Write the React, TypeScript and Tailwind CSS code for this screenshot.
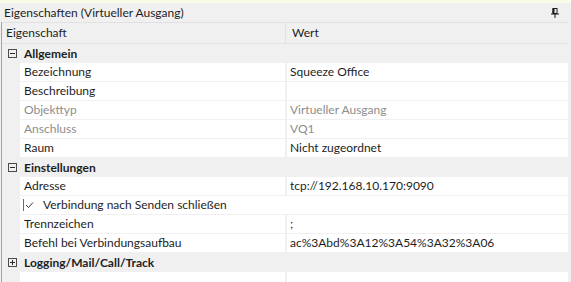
import React from "react";

type Row =
  | { kind: "cat"; label: string; open: boolean }
  | { kind: "prop"; name: string; value: string; muted?: boolean }
  | { kind: "check"; label: string };

const rows: Row[] = [
  { kind: "cat", label: "Allgemein", open: true },
  { kind: "prop", name: "Bezeichnung", value: "Squeeze Office" },
  { kind: "prop", name: "Beschreibung", value: "" },
  { kind: "prop", name: "Objekttyp", value: "Virtueller Ausgang", muted: true },
  { kind: "prop", name: "Anschluss", value: "VQ1", muted: true },
  { kind: "prop", name: "Raum", value: "Nicht zugeordnet" },
  { kind: "cat", label: "Einstellungen", open: true },
  { kind: "prop", name: "Adresse", value: "tcp://192.168.10.170:9090" },
  { kind: "check", label: "Verbindung nach Senden schließen" },
  { kind: "prop", name: "Trennzeichen", value: ";" },
  { kind: "prop", name: "Befehl bei Verbindungsaufbau", value: "ac%3Abd%3A12%3A54%3A32%3A06" },
  { kind: "cat", label: "Logging/Mail/Call/Track", open: false },
];

function ToggleBox({ open }: { open: boolean }) {
  return (
    <svg width="9" height="9" viewBox="0 0 9 9" className="shrink-0">
      <rect x="0.5" y="0.5" width="8" height="8" fill="none" stroke="#4a4a4a" />
      <line x1="2" y1="4.5" x2="7" y2="4.5" stroke="#2a2a2a" />
      {!open && <line x1="4.5" y1="2" x2="4.5" y2="7" stroke="#2a2a2a" />}
    </svg>
  );
}

function PinIcon() {
  return (
    <svg width="9" height="10" viewBox="0 0 9 10">
      <rect x="2" y="0.5" width="4" height="5" fill="none" stroke="#1a1a1a" />
      <line x1="2.5" y1="0.5" x2="2.5" y2="5.5" stroke="#1a1a1a" strokeWidth="2" />
      <line x1="0" y1="6" x2="8" y2="6" stroke="#1a1a1a" />
      <line x1="4" y1="6" x2="4" y2="10" stroke="#1a1a1a" />
    </svg>
  );
}

function PropRow({ row }: { row: Row }) {
  if (row.kind === "cat") {
    return (
      <div className="flex h-[19px] items-center">
        <div className="flex w-[18px] justify-center pl-[2px]">
          <ToggleBox open={row.open} />
        </div>
        <span className="pl-[4px] font-bold text-[#1e1e1e]">{row.label}</span>
      </div>
    );
  }
  if (row.kind === "check") {
    return (
      <div className="flex h-[19px]">
        <div className="w-[18px]" />
        <div className="flex h-[18px] flex-1 items-center bg-white pl-[3px] pr-[3px]">
          <div className="flex h-[12px] w-[12px] items-center justify-center border-l border-[#6a6a6a]">
            <svg width="9" height="8" viewBox="0 0 9 8">
              <path d="M1 4 L3.5 6.5 L8 1.5" fill="none" stroke="#333" strokeWidth="1" />
            </svg>
          </div>
          <span className="pl-[8px] text-[#1e1e1e]">{row.label}</span>
        </div>
      </div>
    );
  }
  const color = row.muted ? "text-[#8d8d8d]" : "text-[#1e1e1e]";
  return (
    <div className="flex h-[19px]">
      <div className="w-[18px]" />
      <div className={`flex h-[18px] w-[265px] items-center bg-white pl-[4px] ${color}`}>{row.name}</div>
      <div className="w-[2px]" />
      <div className={`flex h-[18px] flex-1 items-center bg-white pl-[3px] ${color}`}>{row.value}</div>
    </div>
  );
}

export default function App() {
  return (
    <div
      className="flex h-[282px] w-[571px] flex-col overflow-hidden bg-[#f0f0f0] text-[12px] leading-none"
      style={{ fontFamily: "Lato, 'Noto Sans', sans-serif" }}
    >
      <div className="h-[3px] bg-[#fbfbe9]" />
      <div className="flex h-[19px] items-center justify-between pl-[4px] pr-[11px] text-[#1e1e1e]">
        <span>Eigenschaften (Virtueller Ausgang)</span>
        <PinIcon />
      </div>
      <div className="ml-px flex flex-1 flex-col border-l border-[#a3a3a3] pr-[3px]">
        <div className="flex h-[22px] items-center border-y border-[#e1e1e1] text-[#1e1e1e]">
          <div className="w-[283px] pl-[4px]">Eigenschaft</div>
          <div className="h-full w-px bg-[#e1e1e1]" />
          <div className="pl-[6px]">Wert</div>
        </div>
        {rows.map((r, i) => (
          <PropRow key={i} row={r} />
        ))}
        <div className="flex flex-1">
          <div className="w-[18px]" />
          <div className="w-[265px] bg-white" />
          <div className="w-[2px]" />
          <div className="flex-1 bg-white" />
        </div>
      </div>
    </div>
  );
}
